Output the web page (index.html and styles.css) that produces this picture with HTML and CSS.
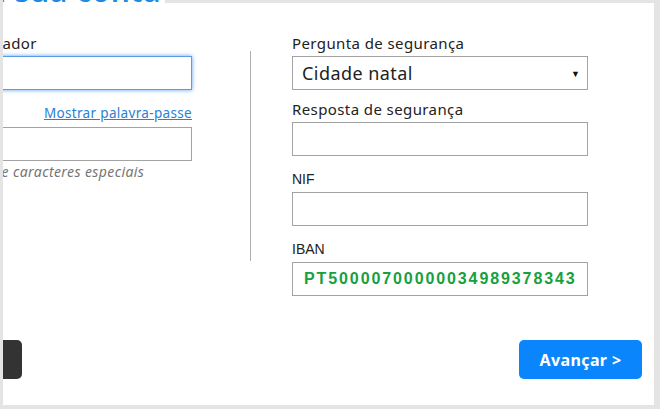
FILE: index.html
```html
<!DOCTYPE html>
<html lang="pt">
<head>
<meta charset="utf-8">
<title>Criar a sua conta</title>
<link rel="stylesheet" href="styles.css">
</head>
<body>
  <h1 class="title"><span>Criar a sua conta</span></h1>
  <main class="panel">
    <div class="form">
      <section class="col col-left">
        <label class="lbl">Nome de utilizador</label>
        <div class="input focus"></div>
        <div class="lbl-row">
          <label class="lbl">Palavra-passe</label>
          <a class="show" href="#">Mostrar palavra-passe</a>
        </div>
        <div class="input"></div>
        <p class="hint">Inclua números e caracteres especiais</p>
      </section>
      <div class="divider"></div>
      <section class="col col-right">
        <label class="lbl">Pergunta de segurança</label>
        <div class="input select"><span class="value">Cidade natal</span><span class="arrow">▼</span></div>
        <label class="lbl lbl-gap">Resposta de segurança</label>
        <div class="input"></div>
        <label class="lbl-plain">NIF</label>
        <div class="input"></div>
        <label class="lbl-plain">IBAN</label>
        <div class="input iban">PT50000700000034989378343</div>
      </section>
    </div>
    <div class="actions">
      <button class="btn back">&lt; Voltar</button>
      <button class="btn next">Avançar &gt;</button>
    </div>
  </main>
</body>
</html>
```
FILE: styles.css
```css
* { box-sizing: border-box; }

body {
  margin: 0;
  width: 660px;
  height: 409px;
  overflow: hidden;
  position: relative;
  background: #e4e4e4;
  font-family: "Noto Sans", sans-serif;
  color: #222;
}

.title {
  position: absolute;
  left: 3px;
  top: 0;
  width: 162px;
  height: 7px;
  margin: 0;
  background: #fff;
  overflow: hidden;
  display: flex;
  justify-content: flex-end;
  padding-right: 4px;
}

.title span {
  display: block;
  flex: none;
  white-space: nowrap;
  font-size: 30px;
  line-height: 30px;
  font-weight: 600;
  letter-spacing: 0.5px;
  color: #1f8ae6;
  margin-top: -24px;
}

.panel {
  margin: 3px 6px 0 3px;
  height: 402px;
  background: #fff;
  overflow: hidden;
}

.form {
  display: flex;
  align-items: flex-start;
  padding-top: 30px;
  margin-left: -108px;
}

.col { display: flex; flex-direction: column; }
.col-left { width: 297px; }
.col-right { width: 296px; }

.divider {
  width: 1px;
  height: 210px;
  margin: 18px 41px 0 58px;
  background: #b0b0b0;
}

.lbl {
  display: block;
  font-size: 15px;
  line-height: 20px;
  letter-spacing: 0.4px;
  color: #222;
  margin-bottom: 3px;
  white-space: nowrap;
}

.lbl-gap { margin-top: 9px; }

.lbl-plain {
  display: block;
  font-family: "Liberation Sans", Arial, sans-serif;
  font-size: 14px;
  line-height: 18px;
  color: #222;
  margin: 14px 0 4px;
}

.input {
  height: 34px;
  border: 1px solid #a3a3a3;
  background: #fff;
}

.input.focus {
  border-color: #5b9cea;
  box-shadow: 0 0 4px rgba(60, 140, 235, 0.85);
}

.lbl-row {
  display: flex;
  justify-content: space-between;
  align-items: baseline;
  margin: 12px 0 4px;
}

.lbl-row .lbl { margin: 0; letter-spacing: 0.7px; }

.show {
  font-size: 13.5px;
  line-height: 20px;
  letter-spacing: 0.33px;
  color: #2a80d6;
  text-decoration: underline;
}

.hint {
  margin: 2px 0 0;
  font-size: 14px;
  line-height: 18px;
  letter-spacing: 0.4px;
  font-style: italic;
  color: #767676;
  white-space: nowrap;
}

.select {
  display: flex;
  align-items: center;
  justify-content: space-between;
  padding: 0 7px 0 9px;
}

.select .value {
  font-size: 18px;
  letter-spacing: 0.45px;
  color: #222;
}

.select .arrow {
  font-size: 9px;
  color: #111;
}

.iban {
  display: flex;
  align-items: center;
  padding-left: 11px;
  font-family: "Liberation Sans", Arial, sans-serif;
  font-weight: bold;
  font-size: 16px;
  letter-spacing: 1.9px;
  color: #16a03e;
  white-space: nowrap;
  overflow: hidden;
}

.actions {
  display: flex;
  justify-content: space-between;
  margin: 44px 12px 0 -108px;
}

.btn {
  height: 39px;
  border: none;
  border-radius: 5px;
  font-family: "Noto Sans", sans-serif;
  font-weight: bold;
  font-size: 16px;
  letter-spacing: 0.4px;
  color: #fff;
  padding: 0;
}

.back {
  width: 127px;
  background: #333;
}

.next {
  width: 123px;
  background: #0b85fb;
}
```
